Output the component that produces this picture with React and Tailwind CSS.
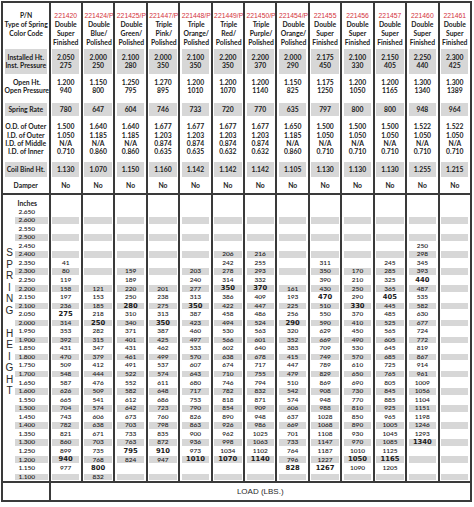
import React from 'react';

// Spring chart data, one entry per part number column
const parts = [
  { pn: '221420', type: ['Double', 'Super', 'Finished'], inst: ['2.050', '275'], open: ['1.200', '940'], rate: '780', dims: ['1.500', '1.050', 'N/A', '0.710'], bind: '1.130', start: '2.350', bold: [275, 940],
    loads: [41, 80, 119, 158, 197, 236, 275, 314, 353, 392, 431, 470, 509, 548, 587, 626, 665, 704, 743, 782, 821, 860, 899, 940, 977] },
  { pn: '221424/P', type: ['Double', 'Blue/', 'Polished'], inst: ['2.000', '250'], open: ['1.150', '800'], rate: '647', dims: ['1.640', '1.185', 'N/A', '0.860'], bind: '1.070', start: '2.200', bold: [250, 800],
    loads: [121, 153, 185, 218, 250, 282, 315, 347, 379, 412, 444, 476, 509, 541, 574, 606, 638, 671, 703, 735, 768, 800, 832] },
  { pn: '221425/P', type: ['Double', 'Green/', 'Polished'], inst: ['2.100', '280'], open: ['1.250', '795'], rate: '604', dims: ['1.640', '1.185', 'N/A', '0.860'], bind: '1.150', start: '2.300', bold: [280, 795],
    loads: [159, 189, 220, 250, 280, 310, 340, 371, 401, 431, 461, 491, 522, 552, 582, 612, 642, 673, 703, 733, 763, 795, 824] },
  { pn: '221447/P', type: ['Triple', 'Pink/', 'Polished'], inst: ['2.000', '350'], open: ['1.270', '895'], rate: '746', dims: ['1.677', '1.203', '0.874', '0.635'], bind: '1.160', start: '2.200', bold: [350, 910],
    loads: [201, 238, 275, 313, 350, 387, 425, 462, 499, 537, 574, 611, 648, 686, 723, 760, 798, 835, 872, 910, 947] },
  { pn: '221448/P', type: ['Triple', 'Orange/', 'Polished'], inst: ['2.100', '350'], open: ['1.200', '1010'], rate: '733', dims: ['1.677', '1.203', '0.874', '0.635'], bind: '1.142', start: '2.300', bold: [350, 1010],
    loads: [203, 240, 277, 313, 350, 387, 423, 460, 497, 533, 570, 607, 643, 680, 717, 753, 790, 826, 863, 900, 936, 973, 1010] },
  { pn: '221449/P', type: ['Triple', 'Red/', 'Polished'], inst: ['2.200', '350'], open: ['1.200', '1070'], rate: '720', dims: ['1.677', '1.203', '0.874', '0.632'], bind: '1.142', start: '2.400', bold: [350, 1070],
    loads: [206, 242, 278, 314, 350, 386, 422, 458, 494, 530, 566, 602, 638, 674, 710, 746, 782, 818, 854, 890, 926, 962, 998, 1034, 1070] },
  { pn: '221450/P', type: ['Triple', 'Purple/', 'Polished'], inst: ['2.200', '370'], open: ['1.200', '1140'], rate: '770', dims: ['1.677', '1.203', '0.874', '0.632'], bind: '1.142', start: '2.400', bold: [370, 1140],
    loads: [216, 255, 293, 332, 370, 409, 447, 486, 524, 563, 601, 640, 678, 717, 755, 794, 832, 871, 909, 948, 986, 1025, 1063, 1102, 1140] },
  { pn: '221454/P', type: ['Double', 'Orange/', 'Polished'], inst: ['2.000', '290'], open: ['1.150', '825'], rate: '635', dims: ['1.650', '1.185', 'N/A', '0.860'], bind: '1.105', start: '2.200', bold: [290, 828],
    loads: [161, 193, 225, 256, 290, 320, 352, 383, 415, 447, 479, 510, 542, 574, 606, 637, 669, 701, 733, 764, 796, 828] },
  { pn: '221455', type: ['Double', 'Super', 'Finished'], inst: ['2.175', '450'], open: ['1.175', '1250'], rate: '797', dims: ['1.500', '1.050', 'N/A', '0.710'], bind: '1.130', start: '2.350', bold: [470, 1267],
    loads: [311, 350, 390, 430, 470, 510, 550, 590, 629, 669, 709, 749, 789, 829, 869, 908, 948, 988, 1028, 1068, 1108, 1147, 1187, 1227, 1267] },
  { pn: '221456', type: ['Double', 'Super', 'Finished'], inst: ['2.100', '330'], open: ['1.200', '1050'], rate: '800', dims: ['1.500', '1.050', 'N/A', '0.710'], bind: '1.130', start: '2.300', bold: [330, 1050],
    loads: [170, 210, 250, 290, 330, 370, 410, 450, 490, 530, 570, 610, 650, 690, 730, 770, 810, 850, 890, 930, 970, 1010, 1050, 1090] },
  { pn: '221457', type: ['Double', 'Super', 'Finished'], inst: ['2.150', '405'], open: ['1.200', '1165'], rate: '800', dims: ['1.500', '1.050', 'N/A', '0.710'], bind: '1.130', start: '2.350', bold: [405, 1165],
    loads: [245, 285, 325, 365, 405, 445, 485, 525, 565, 605, 645, 685, 725, 765, 805, 845, 885, 925, 965, 1005, 1045, 1085, 1125, 1165, 1205] },
  { pn: '221460', type: ['Double', 'Super', 'Finished'], inst: ['2.250', '440'], open: ['1.300', '1340'], rate: '948', dims: ['1.522', '1.050', 'N/A', '0.710'], bind: '1.255', start: '2.450', bold: [440, 1340],
    loads: [250, 298, 345, 393, 440, 487, 535, 582, 630, 677, 724, 772, 819, 867, 914, 961, 1009, 1056, 1104, 1151, 1198, 1246, 1293, 1340] },
  { pn: '221461', type: ['Double', 'Super', 'Finished'], inst: ['2.300', '425'], open: ['1.300', '1389'], rate: '964', dims: ['1.522', '1.050', 'N/A', '0.710'], bind: '1.215', start: null, bold: [],
    loads: [] },
];

// 2.650 down to 1.100 in 0.050 steps
const heights = Array.from({ length: 32 }, (_, i) => (2.65 - i * 0.05).toFixed(3));

function loadAt(part, rowIdx) {
  if (!part.start) return null;
  const offset = Math.round((2.65 - parseFloat(part.start)) / 0.05);
  const v = part.loads[rowIdx - offset];
  return v === undefined ? null : v;
}

function SpecCell({ first, gray, align = 'justify-center', pad = '', children }) {
  return (
    <div className={`flex ${first ? '' : 'border-l-2 border-[#3a3a3a]'}`}>
      <div className={`flex-1 mx-[1.5px] flex flex-col items-center ${align} ${pad} ${gray ? 'bg-[#d7d7d7]' : ''}`}>
        {children}
      </div>
    </div>
  );
}

function SpecRow({ height, gray, label, render, align, pad }) {
  return (
    <div className={`grid grid-cols-[45.5px_repeat(13,minmax(0,1fr))] ${height}`}>
      <SpecCell first gray={gray} align={align} pad={pad}>{label}</SpecCell>
      {parts.map((p) => (
        <SpecCell key={p.pn} gray={gray} align={align} pad={pad}>{render(p)}</SpecCell>
      ))}
    </div>
  );
}

function Lines({ items, leading = 'leading-[8px]' }) {
  return items.map((t, i) => (
    <span key={i} className={`block whitespace-nowrap ${leading}`}>{t}</span>
  ));
}

export default function App() {
  return (
    <div className="bg-white w-[474px] h-[507px] pt-[1px] pl-[1px] font-['Lato',sans-serif] font-bold text-[#222] text-[6.8px]">
      <div className="w-[471px] border-2 border-[#3a3a3a]">
        {/* Header */}
        <SpecRow
          height="h-[45.5px]"
          align="justify-start"
          pad="pt-[7.5px]"
          label={<Lines leading="leading-[9px]" items={['P/N', 'Type of Spring', 'Color Code']} />}
          render={(p) => (
            <>
              <span className="block whitespace-nowrap leading-[9px] text-[#d3323c] font-normal font-['Liberation_Sans',sans-serif] text-[6.8px]">{p.pn}</span>
              <Lines leading="leading-[9px]" items={p.type} />
            </>
          )}
        />
        <SpecRow height="h-[25px]" gray label={<Lines items={['Installed Ht.', 'Inst. Pressure']} />} render={(p) => <Lines items={p.inst} />} />
        <SpecRow height="h-[29.5px]" pad="pb-[4px]" label={<Lines items={['Open Ht.', 'Open Pressure']} />} render={(p) => <Lines items={p.open} />} />
        <SpecRow height="h-[13px]" gray label="Spring Rate" render={(p) => p.rate} />
        <SpecRow
          height="h-[46px]"
          label={<Lines leading="leading-[8.3px]" items={['O.D. of Outer', 'I.D. of Outer', 'I.D. of Middle', 'I.D. of Inner']} />}
          render={(p) => <Lines leading="leading-[8.3px]" items={p.dims} />}
        />
        <SpecRow height="h-[15px]" gray label="Coil Bind Ht." render={(p) => p.bind} />
        <SpecRow height="h-[16px]" label="Damper" render={() => 'No'} />

        {/* Spring height / load section */}
        <div className="flex border-t-2 border-[#3a3a3a]">
          <div className="w-[12px] pt-[52px] pl-[1px] flex flex-col items-center font-normal text-[10px] font-['Liberation_Sans',sans-serif] text-[#2a2a2a]">
            {'SPRING HEIGHT'.split('').map((ch, i) => (
              <span key={i} className="block h-[11.5px] leading-[11.5px]">{ch === ' ' ? '\u00a0' : ch}</span>
            ))}
          </div>
          <div className="flex-1 font-semibold">
            <div className="grid grid-cols-[33.5px_repeat(13,minmax(0,1fr))] h-[12.55px]">
              <div className="flex pt-[4px]">
                <div className="flex-1 flex items-center justify-center pr-[9px] leading-none font-bold">Inches</div>
              </div>
              {parts.map((p) => (
                <div key={p.pn} className="border-l-2 border-[#3a3a3a]" />
              ))}
            </div>
            {heights.map((h, r) => {
              const gray = r % 2 === 1;
              return (
                <div key={h} className="grid grid-cols-[33.5px_repeat(13,minmax(0,1fr))] h-[8.55px]">
                  <div className="flex">
                    <div className={`flex-1 mr-[1px] my-[1px] flex items-center justify-center pr-[9px] leading-none text-[6.5px] ${gray ? 'bg-[#d7d7d7]' : ''}`}>
                      {h}
                    </div>
                  </div>
                  {parts.map((p) => {
                    const v = loadAt(p, r);
                    const isBold = v !== null && p.bold.includes(v);
                    return (
                      <div key={p.pn} className="flex border-l-2 border-[#3a3a3a]">
                        <div className={`flex-1 mx-[1.5px] my-[1px] flex items-center justify-center leading-none ${gray ? 'bg-[#d7d7d7]' : ''}`}>
                          {v !== null && (
                            <span className={isBold ? "font-['DejaVu_Sans',sans-serif] font-bold text-[6.8px] text-[#1a1a1a]" : 'text-[6.5px]'}>{v}</span>
                          )}
                        </div>
                      </div>
                    );
                  })}
                </div>
              );
            })}
          </div>
        </div>

        {/* Footer */}
        <div className="grid grid-cols-[45.5px_1fr] h-[19px] border-t-2 border-[#3a3a3a]">
          <div />
          <div className="border-l-2 border-[#3a3a3a] flex items-center justify-center text-[8px] font-normal font-['Liberation_Sans',sans-serif] text-[#2a2a2a]">
            LOAD (LBS.)
          </div>
        </div>
      </div>
    </div>
  );
}
